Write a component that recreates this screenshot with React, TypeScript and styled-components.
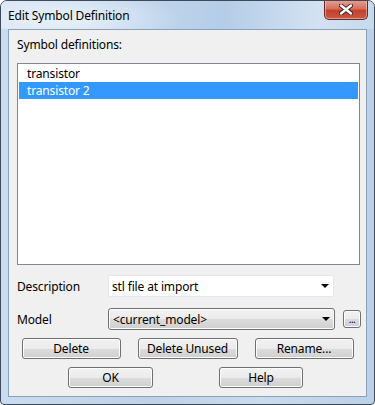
import React, { useState } from 'react';
import styled, { createGlobalStyle } from 'styled-components';

const GlobalStyle = createGlobalStyle`
  html, body {
    margin: 0;
    padding: 0;
    background: #ffffff;
  }
  body {
    font-family: "Noto Sans", "Open Sans", sans-serif;
    font-size: 12px;
    letter-spacing: -0.15px;
    color: #000000;
  }
`;

const symbols = ['transistor', 'transistor 2'];

const App = () => {
  const [selected, setSelected] = useState(1);

  return (
    <>
      <GlobalStyle />
      <Window>
        <TitleBar>
          <Title>Edit Symbol Definition</Title>
          <CloseButton aria-label="Close">
            <svg width="14" height="11" viewBox="0 0 14 11">
              <path d="M2 1.5 L12 9.5 M12 1.5 L2 9.5" stroke="#3b2020" strokeWidth="4.2" strokeLinecap="round" />
              <path d="M2 1.5 L12 9.5 M12 1.5 L2 9.5" stroke="#ffffff" strokeWidth="2.4" strokeLinecap="round" />
            </svg>
          </CloseButton>
        </TitleBar>

        <Client>
          <SectionLabel>Symbol definitions:</SectionLabel>
          <ListBox>
            {symbols.map((name, i) => (
              <ListRow key={name} selected={i === selected} onClick={() => setSelected(i)}>
                {name}
              </ListRow>
            ))}
          </ListBox>

          <FieldRow first>
            <FieldLabel>Description</FieldLabel>
            <EditCombo>
              <span>stl file at import</span>
              <Arrow />
            </EditCombo>
          </FieldRow>

          <FieldRow>
            <FieldLabel>Model</FieldLabel>
            <DropCombo>
              <span>&lt;current_model&gt;</span>
              <Arrow />
            </DropCombo>
            <DotsButton>...</DotsButton>
          </FieldRow>

          <ButtonRow gap="17px" top="8px" shift="-2px">
            <PushButton w="99px">Delete</PushButton>
            <PushButton w="100px">Delete Unused</PushButton>
            <PushButton w="99px">Rename...</PushButton>
          </ButtonRow>
          <ButtonRow gap="66px" top="8px" shift="-6px">
            <PushButton w="85px">OK</PushButton>
            <PushButton w="84px">Help</PushButton>
          </ButtonRow>
        </Client>
      </Window>
    </>
  );
};

export default App;

const Window = styled.div`
  width: 375px;
  height: 405px;
  box-sizing: border-box;
  border: 1px solid #3e4a5a;
  border-radius: 7px 7px 4px 4px;
  background: linear-gradient(to right, #c9dcf0 0%, #bcd2ea 40%, #c8dbef 70%, #b9d0e9 100%);
  display: flex;
  flex-direction: column;
  overflow: hidden;
`;

const TitleBar = styled.div`
  height: 28px;
  display: flex;
  align-items: flex-start;
  justify-content: space-between;
  padding-left: 7px;
  padding-right: 6px;
  background:
    radial-gradient(ellipse 120px 30px at 60px 18px, rgba(236, 243, 251, 0.9), rgba(236, 243, 251, 0) 100%),
    linear-gradient(to right, #d6e4f3 0%, #bcd3eb 45%, #b4cde8 60%, #d3e2f2 85%, #c6d9ee 100%);
`;

const Title = styled.div`
  font-size: 12px;
  line-height: 16px;
  padding-top: 7px;
  color: #000000;
`;

const CloseButton = styled.div`
  margin-top: -1px;
  width: 44px;
  height: 20px;
  box-sizing: border-box;
  border: 1px solid #5d2a26;
  border-top: none;
  border-radius: 0 0 5px 5px;
  background: linear-gradient(to bottom, #e9a192 0%, #d7715f 45%, #c4412d 55%, #c85a45 100%);
  box-shadow: inset 0 0 0 1px rgba(255, 220, 210, 0.5);
  display: flex;
  align-items: center;
  justify-content: center;
`;

const Client = styled.div`
  margin: 0 7px 7px 7px;
  flex: 1;
  border: 1px solid #8ca0b8;
  background: #f0f0f0;
  display: flex;
  flex-direction: column;
  padding: 0 6px 0 8px;
`;

const SectionLabel = styled.div`
  line-height: 16px;
  margin-top: 7px;
`;

const ListBox = styled.div`
  margin-top: 10px;
  height: 202px;
  box-sizing: border-box;
  border: 1px solid #828790;
  background: #ffffff;
  padding: 1px 1px 0 1px;
`;

const ListRow = styled.div<{ selected?: boolean }>`
  height: 17px;
  line-height: 17px;
  padding-left: 8px;
  background: ${(p) => (p.selected ? '#3399ff' : 'transparent')};
  color: ${(p) => (p.selected ? '#ffffff' : '#000000')};
`;

const FieldRow = styled.div<{ first?: boolean }>`
  display: flex;
  align-items: center;
  height: 22px;
  margin-top: ${(p) => (p.first ? '10px' : '11px')};
`;

const FieldLabel = styled.div`
  width: 91px;
  flex-shrink: 0;
`;

const Arrow = styled.i`
  width: 0;
  height: 0;
  border-left: 4px solid transparent;
  border-right: 4px solid transparent;
  border-top: 4px solid #000000;
`;

const EditCombo = styled.div`
  width: 226px;
  height: 22px;
  flex-shrink: 0;
  box-sizing: border-box;
  border: 1px solid #e3e9ef;
  background: #ffffff;
  display: flex;
  align-items: center;
  justify-content: space-between;
  padding: 0 4px 0 3px;
`;

const buttonFace = `
  box-sizing: border-box;
  border: 1px solid #707070;
  border-radius: 3px;
  background: linear-gradient(to bottom, #f2f2f2 0%, #ebebeb 50%, #dddddd 50%, #cfcfcf 100%);
  box-shadow: inset 0 0 0 1px #fcfcfc;
`;

const DropCombo = styled.div`
  ${buttonFace}
  width: 227px;
  height: 22px;
  flex-shrink: 0;
  display: flex;
  align-items: center;
  justify-content: space-between;
  padding: 0 4px 0 4px;
`;

const DotsButton = styled.div`
  ${buttonFace}
  margin-left: 8px;
  width: 18px;
  height: 18px;
  flex-shrink: 0;
  font-size: 10px;
  line-height: 16px;
  text-align: center;
  letter-spacing: -0.5px;
`;

const ButtonRow = styled.div<{ gap: string; top: string; shift?: string }>`
  display: flex;
  justify-content: center;
  gap: ${(p) => p.gap};
  margin-top: ${(p) => p.top};
  margin-left: ${(p) => p.shift || '0'};
`;

const PushButton = styled.div<{ w: string }>`
  ${buttonFace}
  width: ${(p) => p.w};
  height: 21px;
  line-height: 19px;
  text-align: center;
`;
